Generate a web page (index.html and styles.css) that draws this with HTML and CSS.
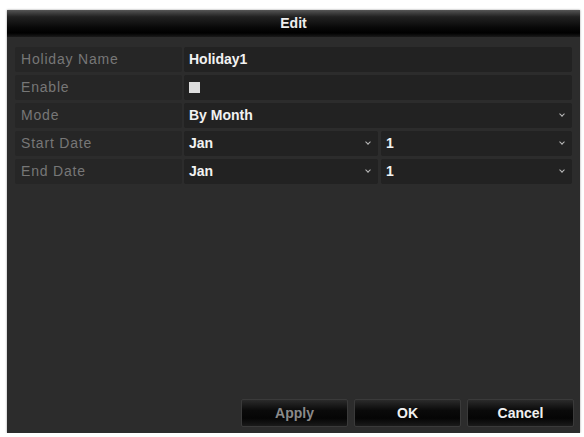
FILE: index.html
```html
<!DOCTYPE html>
<html lang="en">
<head>
    <meta charset="UTF-8">
    <meta name="viewport" content="width=device-width, initial-scale=1.0">
    <title>Edit</title>
    <link rel="stylesheet" href="styles.css">
</head>
<body>
    <div class="dialog">
        <div class="title">Edit</div>

        <div class="form">
            <div class="row">
                <div class="label">Holiday Name</div>
                <div class="field">Holiday1</div>
            </div>
            <div class="row">
                <div class="label">Enable</div>
                <div class="field"><span class="check"></span></div>
            </div>
            <div class="row">
                <div class="label">Mode</div>
                <div class="field select">By Month<span class="arrow"></span></div>
            </div>
            <div class="row">
                <div class="label">Start Date</div>
                <div class="pair">
                    <div class="field select">Jan<span class="arrow"></span></div>
                    <div class="field select">1<span class="arrow"></span></div>
                </div>
            </div>
            <div class="row">
                <div class="label">End Date</div>
                <div class="pair">
                    <div class="field select">Jan<span class="arrow"></span></div>
                    <div class="field select">1<span class="arrow"></span></div>
                </div>
            </div>
        </div>

        <div class="buttons">
            <button class="btn disabled">Apply</button>
            <button class="btn">OK</button>
            <button class="btn">Cancel</button>
        </div>
    </div>
</body>
</html>
```

FILE: styles.css
```css
body {
    margin: 0;
    background: #fff;
    font-family: 'Liberation Sans', Arial, sans-serif;
}
.dialog {
    margin: 10px 0 0 7px;
    width: 573px;
    height: 423px;
    background: #2c2c2c;
    display: flex;
    flex-direction: column;
    box-shadow: 0 0 2px rgba(0,0,0,0.4);
}
.title {
    height: 27px;
    line-height: 26px;
    text-align: center;
    color: #eee;
    font-size: 14px;
    font-weight: bold;
    background: linear-gradient(#555, #222 25%, #080808 65%, #000 85%, #1a1a1a);
}
.form {
    margin: 10px 8px 0 8px;
    display: flex;
    flex-direction: column;
    gap: 3px;
}
.row {
    display: grid;
    grid-template-columns: 167px 1fr;
    gap: 2px;
    height: 25px;
}
.label {
    background: #262626;
    color: #777;
    font-size: 14px;
    letter-spacing: 0.8px;
    line-height: 25px;
    padding-left: 6px;
    border-radius: 2px;
}
.field {
    background: #222;
    color: #f2f2f2;
    font-size: 14px;
    font-weight: bold;
    line-height: 25px;
    padding-left: 5px;
    position: relative;
    border-radius: 2px;
}
.pair {
    display: grid;
    grid-template-columns: 194px 1fr;
    gap: 3px;
}
.check {
    display: inline-block;
    width: 11px;
    height: 11px;
    background: #ddd;
    vertical-align: -1px;
}
.arrow {
    position: absolute;
    right: 8px;
    top: 9px;
    width: 3px;
    height: 3px;
    border-right: 1.5px solid #bbb;
    border-bottom: 1.5px solid #bbb;
    transform: rotate(45deg);
}
.buttons {
    margin-top: auto;
    margin-bottom: 6px;
    display: flex;
    justify-content: flex-end;
    gap: 6px;
    padding-right: 6px;
}
.btn {
    width: 107px;
    height: 28px;
    border: 1px solid #3a3a3a;
    border-radius: 2px;
    background: linear-gradient(#2a2a2a, #0a0a0a 40%, #050505 70%, #1a1a1a);
    color: #f0f0f0;
    font-family: 'Liberation Sans', Arial, sans-serif;
    font-size: 14px;
    font-weight: bold;
}
.btn.disabled {
    color: #8a8a8a;
}
```
